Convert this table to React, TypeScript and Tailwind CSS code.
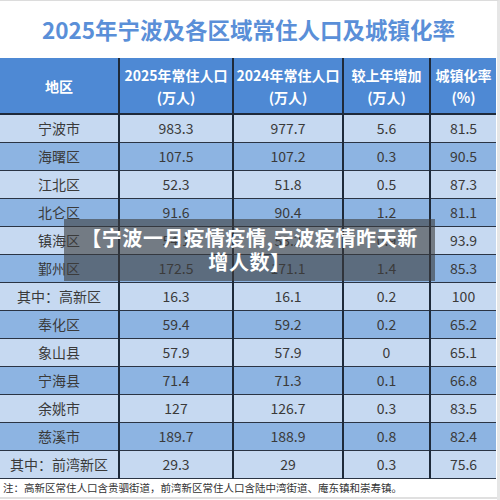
import React from "react";

const rows: [string, string, string, string, string][] = [
  ["宁波市", "983.3", "977.7", "5.6", "81.5"],
  ["海曙区", "107.5", "107.2", "0.3", "90.5"],
  ["江北区", "52.3", "51.8", "0.5", "87.3"],
  ["北仑区", "91.6", "90.4", "1.2", "81.1"],
  ["镇海区", "54.1", "53.2", "0.9", "93.9"],
  ["鄞州区", "172.5", "171.1", "1.4", "85.3"],
  ["其中：高新区", "16.3", "16.1", "0.2", "100"],
  ["奉化区", "59.4", "59.2", "0.2", "65.2"],
  ["象山县", "57.9", "57.9", "0", "65.1"],
  ["宁海县", "71.4", "71.3", "0.1", "66.8"],
  ["余姚市", "127", "126.7", "0.3", "83.5"],
  ["慈溪市", "189.7", "188.9", "0.8", "82.4"],
  ["其中：前湾新区", "29.3", "29", "0.3", "75.6"],
];

const widths = ["w-[119px]", "w-[114px]", "w-[110px]", "w-[87px]", "w-[66px]"];

export default function App() {
  return (
    <div
      className="relative w-[500px] h-[500px] bg-white overflow-hidden border-t border-t-[#dcdcdc] border-r-[3px] border-r-[#e6e6e6]"
      style={{ fontFamily: '"Noto Sans CJK SC", "Noto Sans", sans-serif' }}
    >
      <div className="h-[57px] flex items-center justify-center">
        <h1 className="text-[22.5px] font-bold text-[#5a8fd8] leading-none">
          2025年宁波及各区域常住人口及城镇化率
        </h1>
      </div>
      <table className="border-collapse table-fixed w-[496px]">
        <thead>
          <tr className="bg-[#4e89d4] text-white font-bold text-[14px] leading-[22px] h-[56px]">
            <th className={`${widths[0]} border-r-2 border-r-[#1e2a3a] border-b-2 border-b-[#1e2a3a] font-bold`}>地区</th>
            <th className={`${widths[1]} border-r-2 border-r-[#1e2a3a] border-b-2 border-b-[#1e2a3a] font-bold`}>
              2025年常住人口<br />(万人)
            </th>
            <th className={`${widths[2]} border-r-2 border-r-[#1e2a3a] border-b-2 border-b-[#1e2a3a] font-bold`}>
              2024年常住人口<br />(万人)
            </th>
            <th className={`${widths[3]} border-r-2 border-r-[#1e2a3a] border-b-2 border-b-[#1e2a3a] font-bold`}>
              较上年增加<br />(万人)
            </th>
            <th className={`${widths[4]} border-b-2 border-b-[#1e2a3a] font-bold`}>
              城镇化率<br />(%)
            </th>
          </tr>
        </thead>
        <tbody>
          {rows.map((r, i) => (
            <tr
              key={i}
              className={`h-[28px] text-[14px] text-[#3a3a3a] leading-none ${i % 2 === 0 ? "bg-[#c6d9f1]" : "bg-[#8db4e2]"}`}
            >
              {r.map((c, j) => (
                <td
                  key={j}
                  className={`text-center border-b border-b-[#2a3444] ${j < 4 ? "border-r-2 border-r-[#1e2a3a]" : ""}`}
                >
                  {c}
                </td>
              ))}
            </tr>
          ))}
        </tbody>
      </table>
      <div className="h-[20px] pl-[3px] flex items-center text-[10.5px] text-[#333] border-b-2 border-b-[#e0e0e0]">
        注：高新区常住人口含贵驷街道，前湾新区常住人口含陆中湾街道、庵东镇和崇寿镇。
      </div>
      <div className="absolute left-[64px] top-[218px] w-[371px] h-[62px] bg-[rgba(60,60,60,0.6)] flex items-center justify-center">
        <p className="text-white font-bold text-[20px] leading-[24px] text-center tracking-[0.6px]">
          【宁波一月疫情疫情,宁波疫情昨天新
          <br />
          增人数】
        </p>
      </div>
    </div>
  );
}
